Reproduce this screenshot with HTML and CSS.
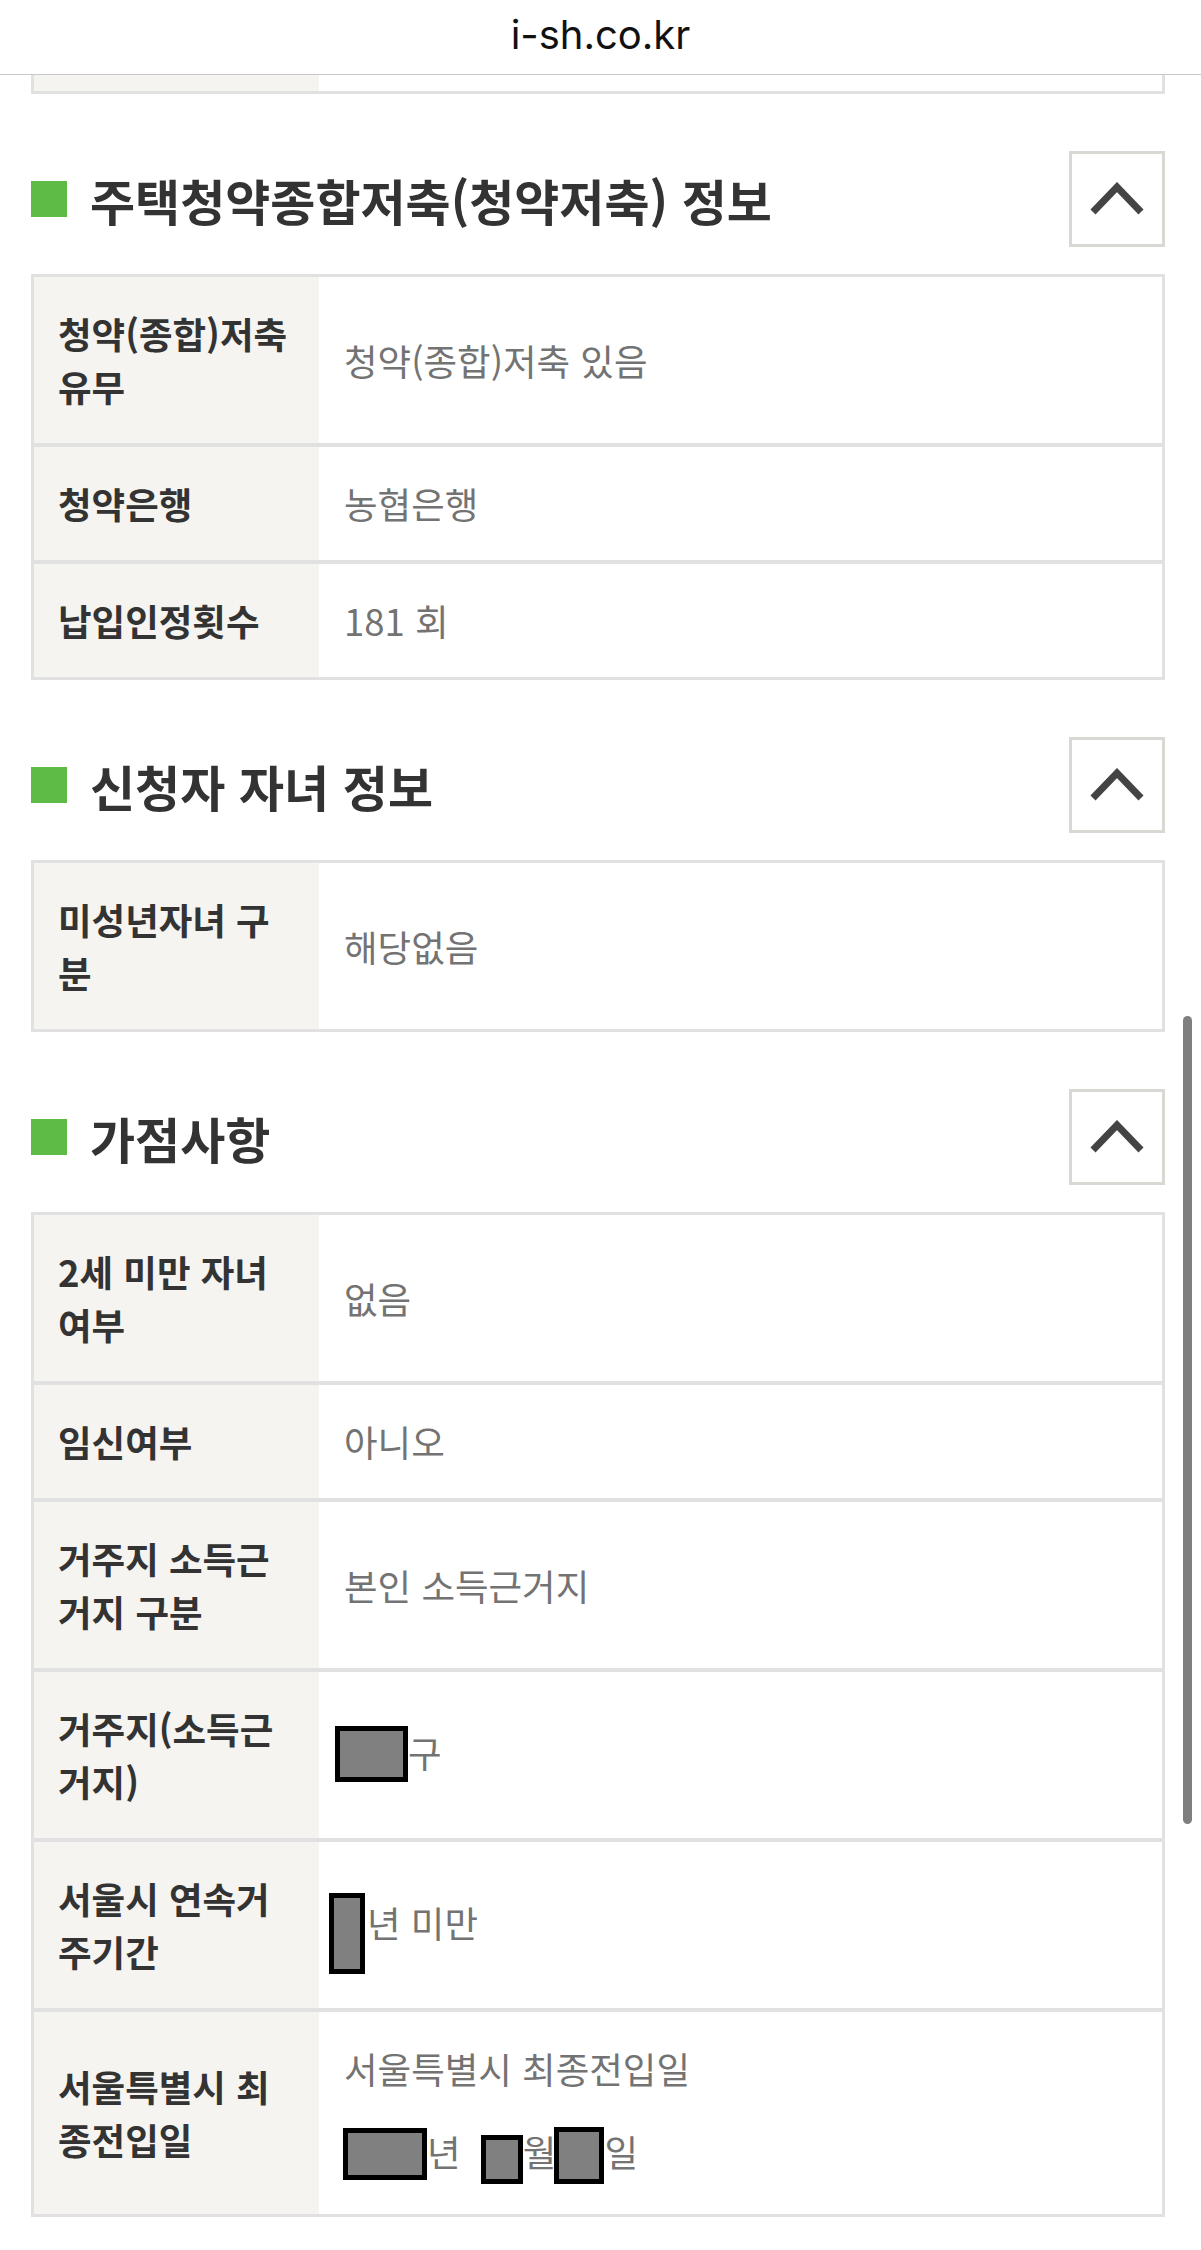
FILE: index.html
```html
<!DOCTYPE html>
<html lang="ko">
<head>
    <meta charset="UTF-8">
    <meta name="viewport" content="width=device-width, initial-scale=1.0">
    <title>청약신청 정보 확인</title>
    <link rel="stylesheet" href="styles.css">
</head>
<body>
    <div class="addr-bar">i-sh.co.kr</div>

    <div class="page">
        <!-- end of the previous table, scrolled under the address bar -->
        <div class="table-tail"><span class="tail-label"></span></div>

        <div class="section">
            <div class="sec-head">
                <h3 class="sec-title">주택청약종합저축(청약저축) 정보</h3>
                <button class="toggle" type="button" aria-label="접기">
                    <svg viewBox="0 0 54 34"><path d="M3 30 L27 5 L51 30"/></svg>
                </button>
            </div>
            <table class="info-table">
                <tr>
                    <th>청약(종합)저축 유무</th>
                    <td>청약(종합)저축 있음</td>
                </tr>
                <tr>
                    <th>청약은행</th>
                    <td>농협은행</td>
                </tr>
                <tr>
                    <th>납입인정횟수</th>
                    <td>181 회</td>
                </tr>
            </table>
        </div>

        <div class="section">
            <div class="sec-head">
                <h3 class="sec-title">신청자 자녀 정보</h3>
                <button class="toggle" type="button" aria-label="접기">
                    <svg viewBox="0 0 54 34"><path d="M3 30 L27 5 L51 30"/></svg>
                </button>
            </div>
            <table class="info-table">
                <tr>
                    <th>미성년자녀 구분</th>
                    <td>해당없음</td>
                </tr>
            </table>
        </div>

        <div class="section">
            <div class="sec-head">
                <h3 class="sec-title">가점사항</h3>
                <button class="toggle" type="button" aria-label="접기">
                    <svg viewBox="0 0 54 34"><path d="M3 30 L27 5 L51 30"/></svg>
                </button>
            </div>
            <table class="info-table">
                <tr>
                    <th>2세 미만 자녀 여부</th>
                    <td>없음</td>
                </tr>
                <tr>
                    <th>임신여부</th>
                    <td>아니오</td>
                </tr>
                <tr>
                    <th>거주지 소득근거지 구분</th>
                    <td>본인 소득근거지</td>
                </tr>
                <tr>
                    <th>거주지(소득근거지)</th>
                    <td><span class="mask mask-gu"></span>구</td>
                </tr>
                <tr>
                    <th>서울시 연속거주기간</th>
                    <td><span class="mask mask-period"></span>년 미만</td>
                </tr>
                <tr>
                    <th>서울특별시 최종전입일</th>
                    <td>
                        <p class="val-line">서울특별시 최종전입일</p>
                        <div class="date-line"><span class="mask mask-y"></span>년 <span class="mask mask-m"></span>월<span class="mask mask-d"></span>일</div>
                    </td>
                </tr>
            </table>
        </div>
    </div>

    <div class="scroll-thumb"></div>
</body>
</html>
```

FILE: styles.css
```css
body {
    margin: 0;
    position: relative;
    font-family: "Noto Sans CJK KR", "Noto Sans", sans-serif;
    color: #333;
    background: #fff;
}
.addr-bar {
    height: 74px;
    line-height: 70px;
    border-bottom: 1px solid #c9c9c9;
    text-align: center;
    font-family: Inter, "Liberation Sans", sans-serif;
    font-size: 40px;
    color: #111;
}
.page {
    margin: 0 36px 0 31px;
}
.table-tail {
    display: flex;
    height: 16px;
    border: 3px solid #e1e1e1;
    border-top: 0;
}
.tail-label {
    width: 285px;
    background: #f5f4f1;
}
.section {
    margin-top: 57px;
}
.sec-head {
    display: flex;
    align-items: center;
    justify-content: space-between;
    height: 96px;
    margin-bottom: 27px;
}
.sec-title {
    display: flex;
    align-items: center;
    gap: 23px;
    margin: 0;
    font-size: 49px;
    line-height: 1;
    font-weight: 700;
    color: #333;
}
.sec-title::before {
    content: "";
    width: 36px;
    height: 36px;
    background: #5dbb46;
}
.toggle {
    display: flex;
    align-items: center;
    justify-content: center;
    box-sizing: border-box;
    width: 96px;
    height: 96px;
    padding: 0;
    border: 3px solid #d9d9d4;
    border-radius: 0;
    background: #fff;
}
.toggle svg {
    width: 54px;
    height: 34px;
    fill: none;
    stroke: #444;
    stroke-width: 7;
}
.info-table {
    width: 100%;
    table-layout: fixed;
    border-collapse: separate;
    border-spacing: 0;
    border: 3px solid #e1e1e1;
    font-size: 36.5px;
    line-height: 53px;
}
.info-table th,
.info-table td {
    padding: 30px 24px;
    vertical-align: middle;
    text-align: left;
}
.info-table th {
    width: 237px;
    background: #f5f4f1;
    font-weight: 700;
    color: #333;
}
.info-table td {
    padding-left: 25px;
    color: #737373;
}
.info-table tr + tr th,
.info-table tr + tr td {
    border-top: 4px solid #e1e1e1;
}
.val-line {
    margin: 0;
}
.date-line {
    margin-top: 30px;
}
/* blacked-out personal data */
.mask {
    display: inline-block;
    box-sizing: border-box;
    border: 5px solid #000;
    background: #808080;
    vertical-align: middle;
}
.mask-gu {
    width: 73px;
    height: 56px;
    margin: -5px 0 2px -9px;
}
.mask-period {
    width: 36px;
    height: 81px;
    margin: -8px 2px -20px -15px;
}
.mask-y {
    width: 84px;
    height: 52px;
    margin: -3px 0 4px -1px;
}
.mask-m {
    width: 42px;
    height: 49px;
    margin: 4px 0 0 10px;
}
.mask-d {
    width: 50px;
    height: 57px;
    margin: -4px 0 0 -2px;
}
.scroll-thumb {
    position: absolute;
    top: 1016px;
    right: 9px;
    width: 9px;
    height: 808px;
    border-radius: 5px;
    background: #7f7f7f;
}
```
